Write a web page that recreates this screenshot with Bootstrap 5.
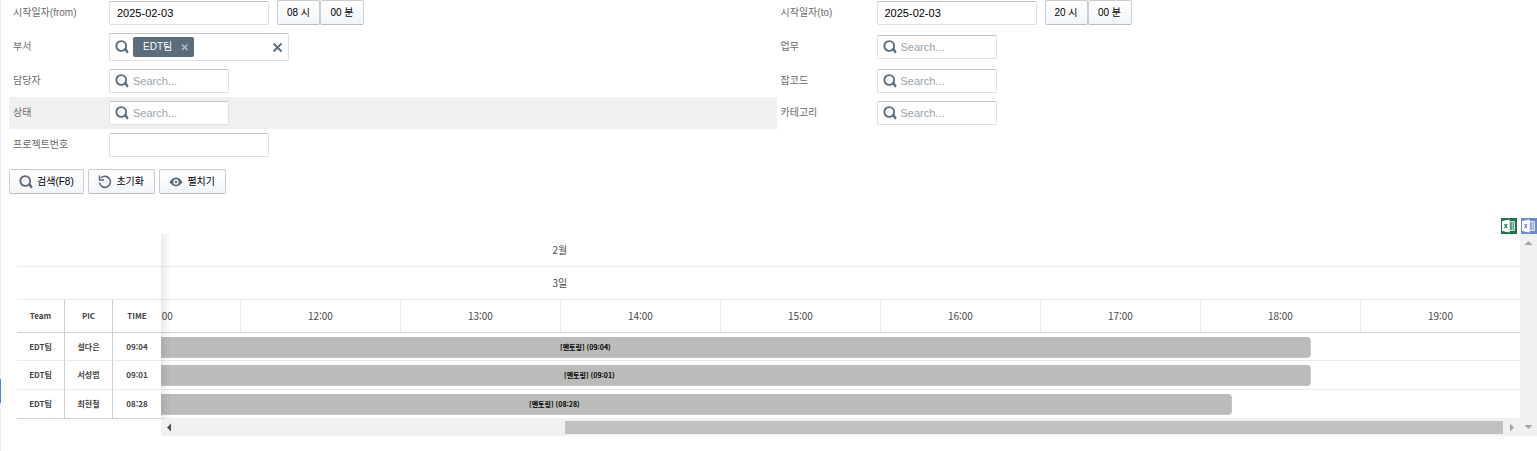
<!DOCTYPE html>
<html lang="ko">
<head>
<meta charset="utf-8">
<meta name="viewport" content="width=device-width, initial-scale=1">
<title>일정</title>
<link href="https://cdn.jsdelivr.net/npm/bootstrap@5.3.0/dist/css/bootstrap.min.css" rel="stylesheet">
<style>
body{font-family:"Liberation Sans","Noto Sans CJK KR",sans-serif;font-size:11px;line-height:16px;color:#000;border-left:1px solid #ececec;overflow:hidden;min-height:100vh}
.side-mark{left:0;top:379px;width:1px;height:24px;background:#4285f4}
.filters{display:grid;grid-template-columns:calc(50vw - 1px) 1fr;padding-left:8px}
.field{display:flex;align-items:center;min-height:32px;padding-left:4px}
.field.top-row{min-height:29px;align-items:flex-start}
.field.top-row label{padding-top:5px}
.field label{flex:0 0 96px;font-size:10px;color:#6a6a6a}
.field.tall{min-height:36px}
.field.hovered{background:#f0f0f0}
.box{border:1px solid #dfe0e1;border-top-color:#c0c2c4;border-radius:2px;background:#fff;height:24px}
input.box{width:160px;padding:0 7px;color:#000}
.top-row input.box{margin-top:1px}
.search-box{display:flex;align-items:center;width:120px;padding-left:5px}
.search-box input{border:0;outline:0;background:none;min-width:0;flex:1;padding:0 0 0 4px}
.search-box input::placeholder{color:#98a3ad;opacity:1}
.search-box.tags{width:180px;height:28px;padding-right:5px}
.tag{background:#5b6c7b;color:#fff;height:20px;border-radius:2px;padding:0 4px 0 10px;margin-left:4px;font-size:10px}
.flat{border:0;background:none;padding:0;display:flex}
.tool-btn{height:25px;min-width:67px;border:1px solid #c9cdd1;border-bottom-color:#b9bec3;border-radius:2px;background:linear-gradient(#fff,#f2f5f8);color:#000;font-size:10px;padding:0 9px;display:flex;align-items:center;justify-content:center}
.tool-btn svg{margin-right:4px}
.tool-btn.time-btn{min-width:43px;padding:0}
.tool-btn.time-btn + .time-btn{min-width:44px}
.ico{width:14px;height:14px;flex:none}
.gantt{font-family:"Noto Sans CJK KR",sans-serif;display:grid;grid-template-columns:144px minmax(0,1fr) 17px;padding-left:16px}
.gantt table{border-collapse:separate;border-spacing:0;table-layout:fixed;text-align:center;line-height:12px}
.gantt th,.gantt td{padding:0;border-bottom:1px solid #ebebeb;vertical-align:middle}
.gantt th{height:33px}
.gantt td{height:29px}
.gantt tbody tr:first-child td{height:28px}
.gantt thead tr:last-child th{border-bottom-color:#d0d0d0}
.people{width:144px;font-size:8px;font-weight:700;color:#454545}
.people thead tr:last-child th,.people td{border-right:1px solid #d0d0d0}
.people tr th:last-child,.people tr td:last-child{border-right:0!important}
.people tbody tr:last-child td{border-bottom-color:#d0d0d0}
.people-pane{position:relative;background:#fff}
.people-pane::after{content:"";position:absolute;left:100%;top:0;height:185px;width:10px;background:linear-gradient(90deg,rgba(0,0,0,.08),rgba(0,0,0,0));z-index:2}
.viewport{display:flex;justify-content:flex-end;overflow:hidden;height:184px}
.hours{width:1920px;flex:none;font-size:10px;color:#4a4a4a}
.hours th{font-weight:400}
.hours thead tr:last-child th:not(:first-child){border-left:1px solid #ebebeb}
.hours td{vertical-align:top;padding-top:4px}
.work{height:21px;line-height:19px;background:#bbbbb9;border:1px solid #c4c4c2;border-top-color:#bbbbb9;border-radius:4px;font-size:7px;font-weight:700;color:#000}
.hbar{height:18px;background:#f0f0f0;display:flex;align-items:center}
.hbar svg,.vbar svg{flex:none}
.thumb{height:13px;width:70.8%;background:#c0c0c0}
.vbar{background:#f0f0f0;display:flex;flex-direction:column;justify-content:space-between;align-items:center}
</style>
</head>
<body>
<svg class="d-none">
<symbol id="lens" viewBox="0 0 14 14"><circle cx="6.2" cy="6" r="4.900" fill="none" stroke="#5b6c7b" stroke-width="1.900"/><path d="M8.600 9 10.900 7.500 13.200 11.200V13.300H11.900Z" fill="#5b6c7b"/></symbol>
<symbol id="sheet" viewBox="0 0 16 16"><path d="M0 0h16v16H0z" fill="currentColor"/><path d="M8 3.500h5.500v9H8z" fill="#fff" fill-opacity=".3" stroke="#fff" stroke-opacity=".75"/><path d="M11.500 4v8" stroke="#fff" stroke-opacity=".4"/><path d="M1 3 8.500 1.500v13L1 13z" fill="#fff"/><path d="M3.500 6 6 10M6 6 3.500 10" stroke="currentColor" stroke-width="1.200"/></symbol>
</svg>
<div class="side-mark position-absolute"></div>
<form class="filters">
 <div class="field top-row"><label for="from">시작일자(from)</label><input id="from" class="box" value="2025-02-03"><div class="d-flex ms-2"><button type="button" class="tool-btn time-btn">08 시</button><button type="button" class="tool-btn time-btn">00 분</button></div></div>
 <div class="field top-row"><label for="to">시작일자(to)</label><input id="to" class="box" value="2025-02-03"><div class="d-flex ms-2"><button type="button" class="tool-btn time-btn">20 시</button><button type="button" class="tool-btn time-btn">00 분</button></div></div>
 <div class="field tall"><label for="dept">부서</label><div class="box search-box tags"><svg class="ico"><use href="#lens"/></svg><span class="tag d-flex align-items-center">EDT팀<button type="button" class="flat ms-2" aria-label="EDT팀 삭제"><svg width="10" height="10" viewBox="0 0 10 10"><path d="M2 2.500l5.500 5.500M7.500 2.500 2 8" stroke="#b5bdc4" stroke-width="1.500"/></svg></button></span><input id="dept"><button type="button" class="flat" aria-label="지우기"><svg width="11" height="11" viewBox="0 0 11 11"><path d="M1.500 1.500l8 8M9.500 1.500l-8 8" stroke="#5b6c7b" stroke-width="1.900"/></svg></button></div></div>
 <div class="field tall"><label for="task">업무</label><div class="box search-box"><svg class="ico"><use href="#lens"/></svg><input id="task" placeholder="Search..."></div></div>
 <div class="field"><label for="pic">담당자</label><div class="box search-box"><svg class="ico"><use href="#lens"/></svg><input id="pic" placeholder="Search..."></div></div>
 <div class="field"><label for="job">잡코드</label><div class="box search-box"><svg class="ico"><use href="#lens"/></svg><input id="job" placeholder="Search..."></div></div>
 <div class="field hovered"><label for="state">상태</label><div class="box search-box"><svg class="ico"><use href="#lens"/></svg><input id="state" placeholder="Search..."></div></div>
 <div class="field"><label for="cat">카테고리</label><div class="box search-box"><svg class="ico"><use href="#lens"/></svg><input id="cat" placeholder="Search..."></div></div>
 <div class="field"><label for="proj">프로젝트번호</label><input id="proj" class="box"></div>
</form>
<div class="d-flex gap-1 ps-2 pt-2">
 <button type="button" class="tool-btn"><svg class="ico"><use href="#lens"/></svg>검색(F8)</button>
 <button type="button" class="tool-btn"><svg class="ico" viewBox="0 0 14 14"><path d="M3 3A5.500 5.500 0 1 1 1.500 7.500" fill="none" stroke="#5b6c7b" stroke-width="1.600"/><path d="M1.500 .5v4.500H6" fill="none" stroke="#5b6c7b" stroke-width="1.500"/></svg>초기화</button>
 <button type="button" class="tool-btn"><svg class="ico" viewBox="0 0 14 14"><path d="M.5 7Q3.500 2.600 7 2.600t6.500 4.400Q10.500 11.400 7 11.400T.5 7Z" fill="#5b6c7b"/><circle cx="7" cy="7" r="2" fill="none" stroke="#fff" stroke-width="1.300"/></svg>펼치기</button>
</div>
<div class="d-flex justify-content-end gap-1 pt-4">
 <button type="button" class="flat" aria-label="Excel"><svg width="16" height="16" color="#217346"><use href="#sheet"/></svg></button>
 <button type="button" class="flat" aria-label="Excel 2"><svg width="16" height="16" color="#7089c4"><use href="#sheet"/></svg></button>
</div>
<div class="gantt">
 <div class="people-pane">
 <table class="people">
  <thead><tr><th colspan="3"></th></tr><tr><th colspan="3"></th></tr><tr><th>Team</th><th>PIC</th><th>TIME</th></tr></thead>
  <tbody><tr><td>EDT팀</td><td>설다은</td><td>09:04</td></tr><tr><td>EDT팀</td><td>서성범</td><td>09:01</td></tr><tr><td>EDT팀</td><td>최현철</td><td>08:28</td></tr></tbody>
 </table>
 </div>
 <div>
  <div class="viewport">
  <table class="hours">
   <colgroup><col span="12" width="160"></colgroup>
   <thead><tr><th colspan="12">2월</th></tr><tr><th colspan="12">3일</th></tr>
   <tr><th colspan="3"></th><th>11:00</th><th>12:00</th><th>13:00</th><th>14:00</th><th>15:00</th><th>16:00</th><th>17:00</th><th>18:00</th><th>19:00</th></tr></thead>
   <tbody>
    <tr><td colspan="12"><div class="work" style="margin-left:260px;width:1451px">[멘토링] (09:04)</div></td></tr>
    <tr><td colspan="12"><div class="work" style="margin-left:268px;width:1443px">[멘토링] (09:01)</div></td></tr>
    <tr><td colspan="12"><div class="work" style="margin-left:277px;width:1355px">[멘토링] (08:28)</div></td></tr>
   </tbody>
  </table>
  </div>
  <div class="hbar justify-content-between"><svg width="17" height="9" viewBox="0 0 17 9"><path d="M10 .5v8L6 4.500z" fill="#505050"/></svg><div class="flex-fill d-flex justify-content-end"><div class="thumb"></div></div><svg width="17" height="9" viewBox="0 0 17 9"><path d="M7 .5v8l4-4z" fill="#a3a3a3"/></svg></div>
 </div>
 <div class="vbar"><svg width="9" height="17" viewBox="0 0 9 17"><path d="M.5 11h8l-4-4z" fill="#a3a3a3"/></svg><svg width="9" height="17" viewBox="0 0 9 17"><path d="M.5 6h8l-4 4z" fill="#a3a3a3"/></svg></div>
</div>
<script src="https://cdn.jsdelivr.net/npm/bootstrap@5.3.0/dist/js/bootstrap.bundle.min.js"></script>
</body>
</html>
